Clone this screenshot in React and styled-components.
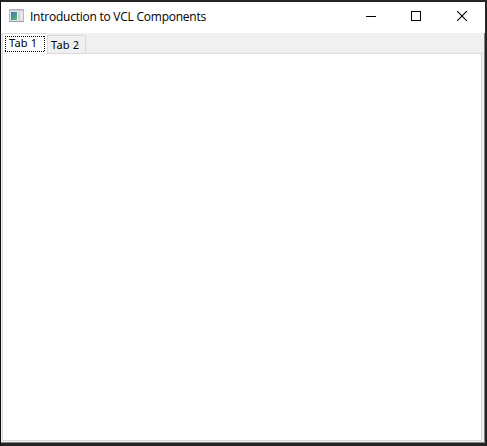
import React from "react";
import styled, { createGlobalStyle } from "styled-components";

const GlobalStyle = createGlobalStyle`
  * { box-sizing: border-box; }
  html, body { margin: 0; padding: 0; overflow: hidden; background: #252424; }
`;

const Desktop = styled.div`
  width: 487px;
  height: 446px;
  padding: 2px 2px 3px 1px;
  background: linear-gradient(90deg, #101216 0 1px, #252424 1px);
`;

const Window = styled.main`
  display: flex;
  flex-direction: column;
  width: 484px;
  height: 441px;
  background: #f0f0f0;
`;

const TitleBar = styled.header`
  display: flex;
  align-items: flex-start;
  flex: 0 0 31px;
  height: 31px;
  padding: 7px 0 0 8px;
  background: #fff;
`;

const Title = styled.h1`
  flex: 1;
  margin: -1px 0 0 5px;
  font: 400 12px/18px "Open Sans", "Noto Sans", sans-serif;
  letter-spacing: ${(p) => p.$tracking}px;
  white-space: nowrap;
  color: #000;
`;

const Controls = styled.div`
  display: flex;
`;

const ControlButton = styled.button`
  display: flex;
  align-items: flex-start;
  justify-content: center;
  width: ${(p) => p.$width}px;
  padding: 2px 0 0;
  border: 0;
  background: transparent;
`;

const Client = styled.section`
  display: flex;
  flex: 1;
  flex-direction: column;
  padding: 0 2px 1px 1px;
  border-right: 1px solid #868686;
  border-bottom: 1px solid #868686;
`;

const TabStrip = styled.div`
  display: flex;
  align-items: flex-end;
  flex: 0 0 21px;
  height: 21px;
`;

const Tab = styled.button`
  display: flex;
  align-items: flex-start;
  justify-content: flex-start;
  text-align: left;
  height: ${(p) => (p.$active ? 21 : 19)}px;
  width: ${(p) => (p.$active ? 45 : 39)}px;
  padding: ${(p) => (p.$active ? "2px" : "2px 0 0 3px")};
  border: solid #d9d9d9;
  border-width: ${(p) => (p.$active ? "1px 0 0 1px" : "1px 1px 1px 1px")};
  background: ${(p) => (p.$active ? "#fff" : "#f0f0f0")};
  font: 400 11px/14px "Noto Sans", "Open Sans", sans-serif;
  letter-spacing: ${(p) => p.$tracking}px;
  white-space: nowrap;
  color: #000;
`;

const FocusFrame = styled.span`
  display: block;
  width: 40px;
  height: 16px;
  padding: 0 0 0 4px;
  line-height: 14px;
  background:
    repeating-linear-gradient(90deg, #000 0 1px, transparent 1px 2px) top / 100% 1px no-repeat,
    repeating-linear-gradient(90deg, #000 0 1px, transparent 1px 2px) bottom / 100% 1px no-repeat,
    repeating-linear-gradient(180deg, #000 0 1px, transparent 1px 2px) left / 1px 100% no-repeat,
    repeating-linear-gradient(180deg, #000 0 1px, transparent 1px 2px) right / 1px 100% no-repeat;
`;

const StripRule = styled.div`
  flex: 1;
  height: 1px;
  background: #d9d9d9;
`;

const TabPage = styled.div`
  flex: 1;
  border: solid #d9d9d9;
  border-width: 0 1px 1px;
  background: #fff;
`;

function AppIcon() {
  return (
    <svg width="16" height="14" viewBox="0 0 16 14" shapeRendering="crispEdges">
      <defs>
        <linearGradient id="pane" x1="0" y1="0" x2="1" y2="1">
          <stop offset="0" stopColor="#4478ac" />
          <stop offset="0.55" stopColor="#4b9690" />
          <stop offset="1" stopColor="#68c070" />
        </linearGradient>
      </defs>
      <rect width="15" height="13" fill="#b3b7be" />
      <rect x="1" y="1" width="13" height="11" fill="#e2e5e8" />
      <rect x="1" y="1" width="13" height="1" fill="#c4c9d2" />
      <rect x="2" y="3" width="6" height="8" fill="url(#pane)" />
      <rect x="8" y="3" width="1" height="8" fill="#f2f4f5" />
      <rect x="9" y="3" width="3" height="8" fill="#d3d9da" />
      <rect x="12" y="3" width="1" height="8" fill="#f5f5f5" />
      <rect y="12" width="15" height="1" fill="#9a9da3" />
    </svg>
  );
}

export default function App() {
  return (
    <>
      <GlobalStyle />
      <Desktop>
        <Window>
          <TitleBar>
            <AppIcon />
            <Title $tracking={-0.24}>Introduction to VCL Components</Title>
            <Controls>
              <ControlButton $width={44} aria-label="Minimize">
                <svg width="10" height="10" viewBox="0 0 10 10" shapeRendering="crispEdges">
                  <path d="M0 5.5H10" stroke="#000" />
                </svg>
              </ControlButton>
              <ControlButton $width={46} aria-label="Maximize">
                <svg width="10" height="10" viewBox="0 0 10 10" shapeRendering="crispEdges">
                  <rect x="0.5" y="0.5" width="9" height="9" fill="none" stroke="#000" />
                </svg>
              </ControlButton>
              <ControlButton $width={46} aria-label="Close">
                <svg width="10" height="10" viewBox="0 0 10 10">
                  <path d="M0 0L10 10M10 0L0 10" stroke="#000" strokeWidth="1.1" />
                </svg>
              </ControlButton>
            </Controls>
          </TitleBar>
          <Client>
            <TabStrip role="tablist">
              <Tab $active $tracking={0.15} role="tab" aria-selected="true">
                <FocusFrame>Tab 1</FocusFrame>
              </Tab>
              <Tab $tracking={0.15} role="tab" aria-selected="false">Tab 2</Tab>
              <StripRule />
            </TabStrip>
            <TabPage role="tabpanel" />
          </Client>
        </Window>
      </Desktop>
    </>
  );
}
